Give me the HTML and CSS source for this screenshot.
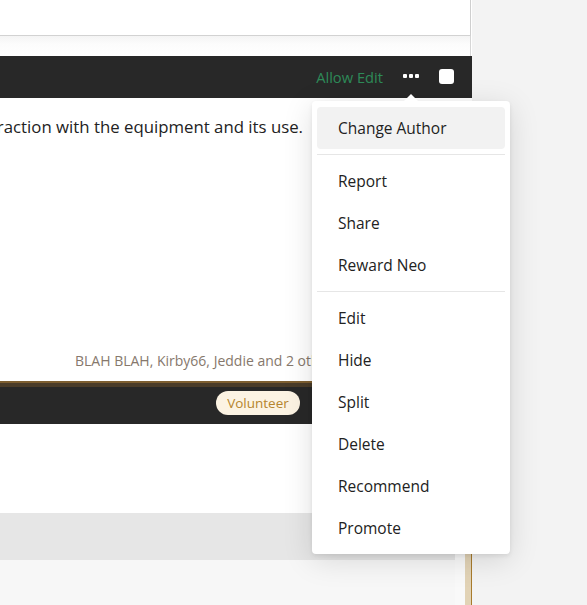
FILE: index.html
```html
<!DOCTYPE html>
<html>
<head>
<meta charset="utf-8">
<link rel="stylesheet" href="styles.css">
</head>
<body>
<div class="page">
  <div class="main">
    <div class="topbox"></div>
    <div class="gap"></div>
    <div class="card">
      <div class="card-head">
        <span class="allow">Allow Edit</span>
        <span class="more"><i></i><i></i><i></i></span>
        <span class="check"></span>
      </div>
      <div class="card-body">
        <p class="text"><span>Users gain experience through interaction with the equipment and its use.</span></p>
        <div class="likes">BLAH BLAH, Kirby66, Jeddie and 2 others</div>
      </div>
      <div class="rule"></div>
      <div class="card-foot"><span class="pill">Volunteer</span></div>
    </div>
    <div class="lower">
      <div class="lower-main">
        <div class="space"></div>
        <div class="band"></div>
        <div class="rest"></div>
      </div>
      <div class="strip-light"></div>
      <div class="strip-tan"></div>
      <div class="strip-gold"></div>
    </div>
  </div>
  <div class="menu">
    <span class="caret"></span>
    <div class="item active">Change Author</div>
    <div class="divider"></div>
    <div class="item">Report</div>
    <div class="item">Share</div>
    <div class="item">Reward Neo</div>
    <div class="divider"></div>
    <div class="item">Edit</div>
    <div class="item">Hide</div>
    <div class="item">Split</div>
    <div class="item">Delete</div>
    <div class="item">Recommend</div>
    <div class="item">Promote</div>
  </div>
</div>
</body>
</html>
```
FILE: styles.css
```css
* { box-sizing: border-box; }
html, body { margin: 0; padding: 0; }
body {
  background: #f3f3f3;
  font-family: "Open Sans", "Noto Sans", sans-serif;
  color: #222;
  width: 587px;
  height: 605px;
  overflow: hidden;
}
.page {
  position: relative;
  display: flex;
  height: 605px;
}
.main {
  width: 472px;
  display: flex;
  flex-direction: column;
  background: #fff;
}
.topbox {
  width: 471px;
  height: 36px;
  background: #fff;
  border-right: 1px solid #cfcfcf;
  border-bottom: 1px solid #d2d2d2;
}
.gap {
  height: 20px;
  width: 471px;
  border-right: 1px solid #d6d6d6;
  background: linear-gradient(#f4f4f4, #fcfcfc 40%, #fff);
}
.card-head {
  height: 42px;
  background: #282828;
  display: flex;
  align-items: center;
  justify-content: flex-end;
  gap: 20px;
  padding-right: 18px;
}
.allow {
  color: #2e8a58;
  font-size: 14.7px;
  line-height: 20px;
}
.more {
  display: flex;
  gap: 2px;
  width: 16px;
  margin-top: -2px;
}
.more i {
  display: block;
  width: 4px;
  height: 4px;
  background: #fff;
  border-radius: 1px;
}
.check {
  width: 15px;
  height: 15px;
  background: #fff;
  border-radius: 3px;
  margin-top: -1px;
}
.card-body {
  background: #fff;
  height: 283px;
  display: flex;
  flex-direction: column;
  justify-content: space-between;
  padding: 18px 0 11px 0;
}
.text {
  margin: 0;
  width: 303px;
  display: flex;
  justify-content: flex-end;
  overflow: hidden;
  white-space: nowrap;
  font-size: 16.8px;
  line-height: 22px;
  color: #222;
}
.likes {
  padding-left: 75px;
  font-size: 14px;
  line-height: 18px;
  color: #86786c;
  white-space: nowrap;
}
.rule {
  height: 6px;
  border-top: 2px solid #7e5f31;
  background: #4a3c29;
}
.card-foot {
  height: 37px;
  background: #282828;
  padding: 4px 0 0 216px;
  display: flex;
  align-items: flex-start;
}
.pill {
  display: inline-block;
  width: 84px;
  height: 24px;
  line-height: 24px;
  text-align: center;
  border-radius: 12px;
  background: #fcf3e3;
  color: #b5852e;
  font-size: 13.5px;
}
.lower {
  flex: 1;
  display: flex;
}
.lower-main {
  width: 455px;
  display: flex;
  flex-direction: column;
}
.space { height: 89px; background: #fff; }
.band { height: 47px; background: #e6e6e6; }
.rest { flex: 1; background: #f7f7f7; }
.strip-light { width: 10px; background: #f9f9f9; }
.strip-tan { width: 6px; background: #e2d3b6; }
.strip-gold { width: 1px; background: #a87b2c; }

.menu {
  position: absolute;
  left: 312px;
  top: 101px;
  width: 198px;
  height: 453px;
  background: #fff;
  border-radius: 4px;
  padding: 6px 5px 5px;
  box-shadow: 0 2px 4px rgba(0,0,0,0.08), 0 6px 30px rgba(0,0,0,0.13);
}
.caret {
  position: absolute;
  top: -7px;
  left: 92px;
  width: 0;
  height: 0;
  border-left: 7px solid transparent;
  border-right: 7px solid transparent;
  border-bottom: 7px solid #fff;
}
.item {
  height: 42px;
  line-height: 42px;
  padding-left: 21px;
  font-size: 15.5px;
  color: #222;
  border-radius: 4px;
}
.item.active { background: #f2f2f2; }
.divider {
  height: 1px;
  background: #e6e6e6;
  margin: 5px 0;
}
```
